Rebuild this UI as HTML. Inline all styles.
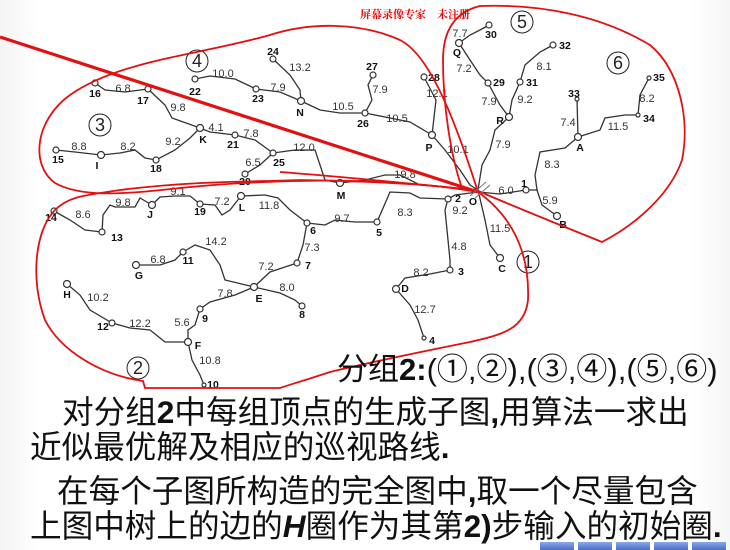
<!DOCTYPE html>
<html><head><meta charset="utf-8"><style>
html,body{margin:0;padding:0;width:730px;height:550px;overflow:hidden;background:#fff;}
.wrap{position:relative;width:730px;height:550px;background:linear-gradient(90deg,#f4f4f4 0,#fff 40px,#fff 690px,#f6f6f6 730px);}
svg{position:absolute;left:0;top:0;}
.t{position:absolute;font-family:"Liberation Sans","Noto Sans CJK SC",sans-serif;color:#111;white-space:nowrap;font-size:31.6px;line-height:1;}
.b{font-weight:bold;}
.wm{position:absolute;left:360px;top:6px;font-family:"Noto Serif CJK SC","Noto Sans CJK SC",serif;color:#e00;font-size:11px;font-weight:bold;}
.sq{position:absolute;top:542px;width:34px;height:10px;background:linear-gradient(#8aa8e8,#3a5fc0);}
</style></head><body><div class="wrap">
<svg width="730" height="550" viewBox="0 0 730 550" font-family="Liberation Sans, sans-serif">
<g fill="none" stroke="#333" stroke-width="1.3">
<path d="M95,83 L105,90 L125,92 L148,89"/>
<path d="M148,89 L165,105 L172,118 L200,128"/>
<path d="M195,79 L210,76 L235,79 L256,89 L280,92 L301,101"/>
<path d="M273,59 L290,75 L300,90 L301,101"/>
<path d="M301,101 L320,110 L340,113 L365,113 L390,118 L410,122 L432,135"/>
<path d="M373,75 L368,85 L372,100 L365,113"/>
<path d="M424,77 L436,100 L432,135"/>
<path d="M432,135 L445,150 L460,170 L470,185 L478,190"/>
<path d="M200,128 L210,132 L235,135 L255,140 L273,153"/>
<path d="M273,153 L295,150 L315,150 L320,165 L325,180 L340,183"/>
<path d="M273,153 L260,165 L245,174"/>
<path d="M56,150 L75,152 L101,155 L120,153 L135,150 L145,158 L156,160 L175,150 L190,138 L200,128"/>
<path d="M340,183 L365,180 L385,175 L400,175 L420,185 L478,190"/>
<path d="M478,190 L482,165 L490,150 L495,130 L509,117"/>
<path d="M459,43 L470,35 L480,30 L489,25"/>
<path d="M459,43 L470,60 L480,75 L488,83 L500,105 L509,117"/>
<path d="M509,117 L512,100 L520,82 L525,65 L540,52 L553,45"/>
<path d="M577,99 L578,137"/>
<path d="M578,137 L600,130 L605,118 L625,115 L638,115 L640,95 L649,78"/>
<path d="M578,137 L565,148 L540,152 L535,175 L537,190 L526,190"/>
<path d="M478,192 L500,194 L526,190"/>
<path d="M537,190 L542,205 L557,216"/>
<path d="M478,190 L485,220 L490,245 L500,258"/>
<path d="M478,192 L455,195 L448,199"/>
<path d="M448,199 L420,198 L410,193 L390,192 L377,222"/>
<path d="M448,199 L445,210 L448,240 L450,260 L450,270"/>
<path d="M377,222 L355,222 L335,220 L325,225 L307,223"/>
<path d="M307,223 L290,210 L278,198 L265,195 L241,196"/>
<path d="M241,196 L230,210 L222,215 L215,205 L200,204"/>
<path d="M200,204 L190,196 L175,196 L160,197 L152,205"/>
<path d="M152,205 L140,198 L135,207 L115,207 L110,205 L103,215 L102,232"/>
<path d="M54,211 L70,220 L85,230 L102,232"/>
<path d="M450,270 L430,274 L405,278 L396,289"/>
<path d="M396,289 L410,305 L418,320 L424,338"/>
<path d="M307,223 L303,245 L297,263"/>
<path d="M297,263 L270,272 L254,287"/>
<path d="M136,265 L160,265 L175,260 L183,252"/>
<path d="M183,252 L195,245 L210,250 L220,265 L225,280 L254,287"/>
<path d="M254,287 L280,293 L295,300 L302,306"/>
<path d="M254,287 L235,295 L210,302 L200,309"/>
<path d="M200,309 L195,325 L188,330 L188,342"/>
<path d="M67,284 L80,295 L90,310 L112,323"/>
<path d="M112,323 L130,328 L150,330 L165,342 L188,342"/>
<path d="M188,342 L192,360 L200,375 L204,385"/>
</g>
<g fill="#fff" stroke="#333" stroke-width="1.2">
<circle cx="95" cy="83" r="3"/><circle cx="148" cy="89" r="3"/><circle cx="195" cy="79" r="3"/><circle cx="256" cy="89" r="3"/><circle cx="273" cy="59" r="3"/><circle cx="301" cy="101" r="3.5"/><circle cx="365" cy="113" r="3"/><circle cx="373" cy="75" r="3"/><circle cx="424" cy="77" r="3"/><circle cx="432" cy="135" r="3.5"/><circle cx="200" cy="128" r="3.5"/><circle cx="235" cy="135" r="3"/><circle cx="273" cy="153" r="3"/><circle cx="245" cy="174" r="3"/><circle cx="56" cy="150" r="3"/><circle cx="101" cy="155" r="3.5"/><circle cx="156" cy="160" r="3"/><circle cx="340" cy="183" r="3.5"/><circle cx="459" cy="43" r="3.5"/><circle cx="489" cy="25" r="3"/><circle cx="488" cy="83" r="3"/><circle cx="520" cy="82" r="3"/><circle cx="553" cy="45" r="3"/><circle cx="509" cy="117" r="3.5"/><circle cx="577" cy="99" r="2"/><circle cx="578" cy="137" r="3.5"/><circle cx="638" cy="115" r="2"/><circle cx="649" cy="78" r="2"/><circle cx="526" cy="190" r="3"/><circle cx="557" cy="216" r="3.5"/><circle cx="448" cy="199" r="3"/><circle cx="377" cy="222" r="3"/><circle cx="307" cy="223" r="3"/><circle cx="450" cy="270" r="3"/><circle cx="500" cy="258" r="3.5"/><circle cx="396" cy="289" r="3.5"/><circle cx="424" cy="338" r="2"/><circle cx="152" cy="205" r="3.5"/><circle cx="200" cy="204" r="3"/><circle cx="241" cy="196" r="3.5"/><circle cx="54" cy="211" r="3"/><circle cx="102" cy="232" r="3"/><circle cx="136" cy="265" r="3.5"/><circle cx="183" cy="252" r="3"/><circle cx="297" cy="263" r="3"/><circle cx="254" cy="287" r="3.5"/><circle cx="302" cy="306" r="3"/><circle cx="200" cy="309" r="3"/><circle cx="67" cy="284" r="3.5"/><circle cx="112" cy="323" r="3"/><circle cx="188" cy="342" r="3.5"/><circle cx="204" cy="385" r="2"/>
</g>
<g fill="#111" font-size="10.5" font-weight="bold" text-anchor="middle">
<text x="95" y="97">16</text><text x="143" y="104">17</text><text x="195" y="95">22</text><text x="258" y="102">23</text><text x="273" y="55">24</text><text x="300" y="116">N</text><text x="363" y="127">26</text><text x="372" y="70">27</text><text x="434" y="81">28</text><text x="429" y="151">P</text><text x="203" y="143">K</text><text x="233" y="148">21</text><text x="279" y="166">25</text><text x="245" y="185">20</text><text x="58" y="163">15</text><text x="97" y="169">I</text><text x="156" y="172">18</text><text x="341" y="199">M</text><text x="473" y="205">O</text><text x="457" y="56">Q</text><text x="491" y="38">30</text><text x="499" y="86">29</text><text x="532" y="86">31</text><text x="565" y="49">32</text><text x="500" y="124">R</text><text x="574" y="97">33</text><text x="580" y="151">A</text><text x="649" y="122">34</text><text x="659" y="81">35</text><text x="524" y="187">1</text><text x="563" y="228">B</text><text x="458" y="202">2</text><text x="379" y="236">5</text><text x="313" y="234">6</text><text x="461" y="275">3</text><text x="502" y="272">C</text><text x="405" y="292">D</text><text x="432" y="344">4</text><text x="150" y="218">J</text><text x="200" y="215">19</text><text x="242" y="211">L</text><text x="51" y="221">14</text><text x="117" y="241">13</text><text x="139" y="279">G</text><text x="188" y="264">11</text><text x="308" y="269">7</text><text x="259" y="302">E</text><text x="302" y="318">8</text><text x="205" y="322">9</text><text x="67" y="298">H</text><text x="103" y="330">12</text><text x="198" y="349">F</text><text x="213" y="388">10</text>
</g>
<g fill="#333" font-size="11" text-anchor="middle">
<text x="123" y="92">6.8</text><text x="223" y="77">10.0</text><text x="278" y="91">7.9</text><text x="300" y="71">13.2</text><text x="343" y="110">10.5</text><text x="380" y="93">7.9</text><text x="437" y="97">12.1</text><text x="397" y="122">10.5</text><text x="178" y="111">9.8</text><text x="216" y="131">4.1</text><text x="251" y="137">7.8</text><text x="304" y="151">12.0</text><text x="253" y="166">6.5</text><text x="79" y="150">8.8</text><text x="128" y="150">8.2</text><text x="173" y="145">9.2</text><text x="458" y="153">10.1</text><text x="405" y="178">19.8</text><text x="460" y="37">7.7</text><text x="464" y="72">7.2</text><text x="489" y="105">7.9</text><text x="525" y="103">9.2</text><text x="503" y="148">7.9</text><text x="544" y="70">8.1</text><text x="568" y="126">7.4</text><text x="618" y="130">11.5</text><text x="647" y="102">8.2</text><text x="552" y="168">8.3</text><text x="506" y="194">6.0</text><text x="550" y="204">5.9</text><text x="460" y="214">9.2</text><text x="500" y="232">11.5</text><text x="405" y="216">8.3</text><text x="342" y="222">9.7</text><text x="459" y="250">4.8</text><text x="421" y="276">8.2</text><text x="425" y="313">12.7</text><text x="178" y="195">9.1</text><text x="123" y="206">9.8</text><text x="222" y="205">7.2</text><text x="269" y="209">11.8</text><text x="83" y="218">8.6</text><text x="312" y="251">7.3</text><text x="216" y="245">14.2</text><text x="158" y="263">6.8</text><text x="266" y="270">7.2</text><text x="287" y="291">8.0</text><text x="225" y="297">7.8</text><text x="98" y="301">10.2</text><text x="140" y="327">12.2</text><text x="182" y="326">5.6</text><text x="210" y="364">10.8</text>
</g>
<g fill="none" stroke="#222" stroke-width="1">
<circle cx="197" cy="61" r="11"/><circle cx="100" cy="125" r="11"/><circle cx="522" cy="22" r="11"/><circle cx="618" cy="63" r="11"/><circle cx="528" cy="262" r="11"/><circle cx="138" cy="368" r="11"/>
</g>
<g fill="#222" font-size="18" text-anchor="middle">
<text x="197" y="67">4</text><text x="100" y="131">3</text><text x="522" y="28">5</text><text x="618" y="69">6</text><text x="528" y="268">1</text><text x="138" y="374">2</text>
</g>
<g fill="none" stroke="#e21010" stroke-width="1.8">
<path d="M478,192 C455,120 430,55 400,40 C360,22 310,22 270,35 C200,55 120,60 70,95 C35,120 30,165 55,183 C80,197 120,195 180,188 C260,180 380,175 478,192 Z"/>
<path d="M476,190 L462,188 C452,160 443,110 443,60 C443,30 455,12 480,6 C540,4 600,15 650,45 C680,70 690,120 682,160 C670,195 635,225 602,242 C560,225 510,205 476,190 Z"/>
<path d="M478,192 C510,215 530,250 528,300 C525,330 500,335 470,342 C430,350 380,360 330,372 C300,382 285,386 280,388 L145,388 L143,381 C100,375 60,350 45,320 C30,280 35,230 55,210 C70,195 90,195 120,190 C200,180 260,182 300,180 C400,182 450,186 478,192 Z"/>
<path d="M478,190 C420,185 360,178 280,172"/>
</g>
<line x1="0" y1="37" x2="478" y2="192" stroke="#e21010" stroke-width="3.2"/>
<path d="M470,196 L486,182 M474,199 L490,185" stroke="#777" stroke-width="1"/>
</svg>
<div class="wm">屏幕录像专家　未注册</div>
<div class="t" style="left:337px;top:354px;font-size:31px;">分组<span class="b">2:</span>(①,②),(③,④),(⑤,⑥)</div>
<div class="t" style="left:62px;top:397px;">对分组<span class="b">2</span>中每组顶点的生成子图<span class="b">,</span>用算法一求出</div>
<div class="t" style="left:30px;top:432px;">近似最优解及相应的巡视路线<span class="b">.</span></div>
<div class="t" style="left:57px;top:476px;">在每个子图所构造的完全图中<span class="b">,</span>取一个尽量包含</div>
<div class="t" style="left:30px;top:511px;">上图中树上的边的<i class="b">H</i>圈作为其第<span class="b">2)</span>步输入的初始圈<span class="b">.</span></div>
<div class="sq" style="left:540px"></div><div class="sq" style="left:578px"></div><div class="sq" style="left:616px"></div><div class="sq" style="left:654px"></div><div class="sq" style="left:692px"></div>
</div></body></html>
